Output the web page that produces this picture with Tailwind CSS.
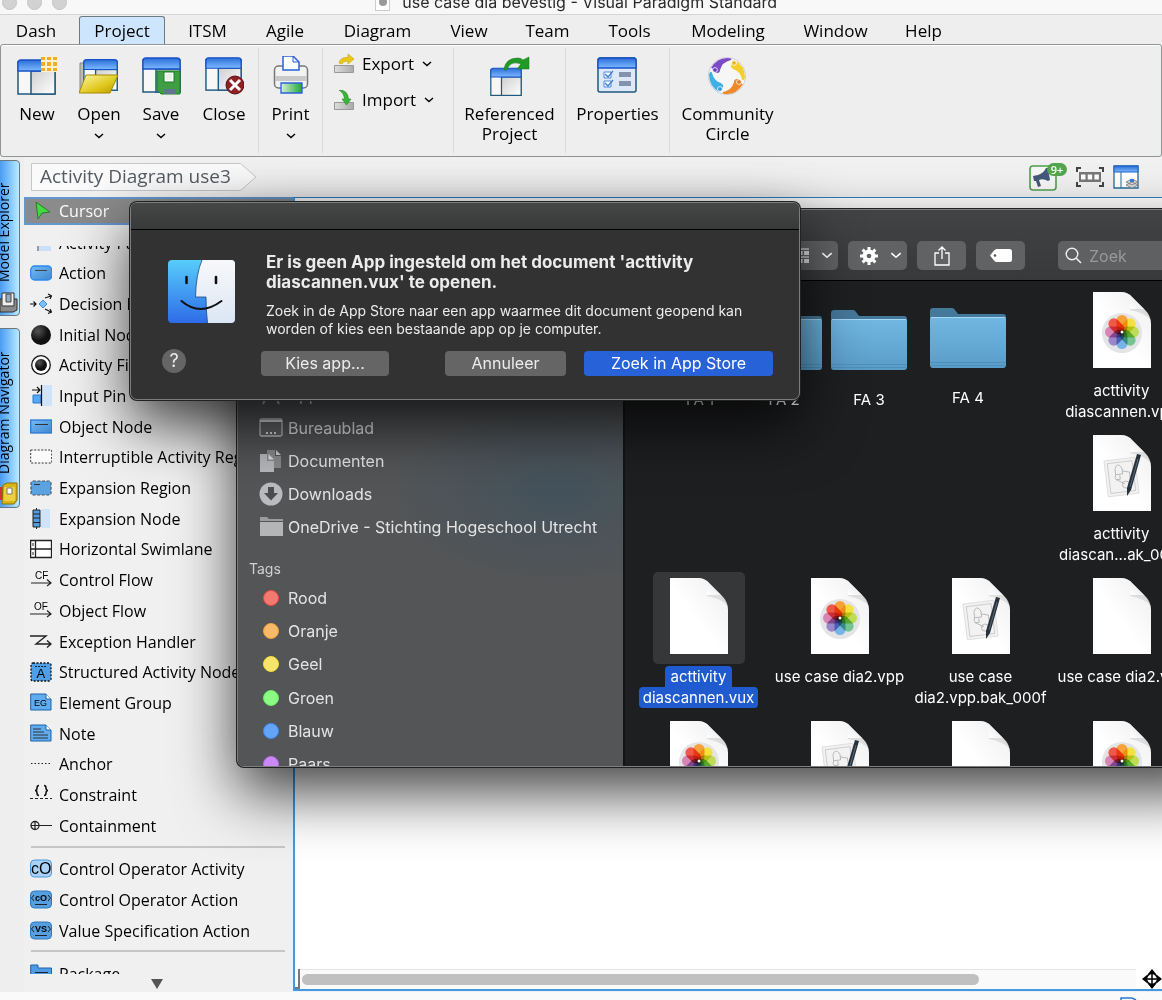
<!DOCTYPE html>
<html lang="nl">
<head>
<meta charset="utf-8">
<title>use case dia bevestig - Visual Paradigm Standard</title>
<script src="https://cdn.jsdelivr.net/npm/@tailwindcss/browser@4"></script>
</head>
<body class="h-screen overflow-hidden bg-[#eeeeee] font-['Open_Sans',sans-serif] text-black">

<svg class="absolute h-0 w-0" aria-hidden="true">
  <defs>
    <linearGradient id="gBar" x1="0" y1="0" x2="0" y2="1"><stop offset="0" stop-color="#2b6fd8"/><stop offset="1" stop-color="#7db9ff"/></linearGradient>
    <linearGradient id="gPane" x1="0" y1="0" x2="1" y2="1"><stop offset="0" stop-color="#cfcfcf"/><stop offset="1" stop-color="#ffffff"/></linearGradient>
    <linearGradient id="gBlue" x1="0" y1="0" x2="1" y2="1"><stop offset="0" stop-color="#74bbf7"/><stop offset="1" stop-color="#3f86cf"/></linearGradient>
    <linearGradient id="gYellow" x1="0" y1="0" x2="1" y2="1"><stop offset="0" stop-color="#fdf6a8"/><stop offset=".6" stop-color="#e0c81c"/><stop offset="1" stop-color="#b99a00"/></linearGradient>
    <linearGradient id="gGreen" x1="0" y1="0" x2="1" y2="0"><stop offset="0" stop-color="#d5f0d8"/><stop offset="1" stop-color="#1fa834"/></linearGradient>
    <linearGradient id="gFolder" x1="0" y1="0" x2="0" y2="1"><stop offset="0" stop-color="#71b7e2"/><stop offset="1" stop-color="#5a9cc8"/></linearGradient>
    <linearGradient id="gFace" x1="0" y1="0" x2="0" y2="1"><stop offset="0" stop-color="#57cdfb"/><stop offset="1" stop-color="#2e6be8"/></linearGradient>
    <linearGradient id="gFace2" x1="0" y1="0" x2="0" y2="1"><stop offset="0" stop-color="#f8f8fa"/><stop offset="1" stop-color="#dbe6f4"/></linearGradient>
    <linearGradient id="gFold" x1="0" y1="1" x2="1" y2="0"><stop offset="0" stop-color="#ffffff"/><stop offset="1" stop-color="#e3e3e3"/></linearGradient>
    <linearGradient id="gShade" x1="0" y1="1" x2="1" y2="0"><stop offset=".45" stop-color="#ffffff"/><stop offset="1" stop-color="#d8d8d8"/></linearGradient>
    <radialGradient id="gBall" cx=".35" cy=".3" r=".8"><stop offset="0" stop-color="#555"/><stop offset=".6" stop-color="#111"/></radialGradient>
    <linearGradient id="gGrey" x1="0" y1="0" x2="1" y2="0"><stop offset="0" stop-color="#ddd"/><stop offset="1" stop-color="#aaa"/></linearGradient>

    <symbol id="appwin" viewBox="0 0 40 40">
      <rect x="1" y="6" width="37" height="32" fill="#f7f7f7" stroke="#1f5a80" stroke-width="1.5"/>
      <rect x="14" y="15" width="24" height="23" fill="url(#gPane)" stroke="#1f5a80" stroke-width="1.5"/>
      <path d="M1 15V7Q1 4 4 4H35Q38 4 38 7V15Z" fill="url(#gBar)" stroke="#1750c8" stroke-width="1.3"/>
    </symbol>
    <symbol id="doc" viewBox="0 0 58 76">
      <path d="M0 0H28Q34 0 38 4L51 17Q58 24 58 32V76H0Z" fill="url(#gShade)"/>
      <path d="M0 0H28Q34 0 38 4V17H51Q58 24 58 32V76H0Z" fill="#fff" fill-opacity=".55"/>
      <path d="M37 3V17H51Z" fill="url(#gFold)"/><path d="M37 17H51Q56 20 58 28Q52 21 37 18Z" fill="#aaa" fill-opacity=".3"/>
    </symbol>
    <symbol id="flower" viewBox="0 0 58 76">
      <circle cx="29" cy="41" r="20" fill="#e4e4e6"/>
      <g style="isolation:isolate">
        <g style="mix-blend-mode:multiply"><rect x="23.500" y="23" width="11" height="18" rx="5.500" fill="#f7a13a"/></g>
        <g style="mix-blend-mode:multiply"><rect x="23.500" y="23" width="11" height="18" rx="5.500" fill="#f4e13e" transform="rotate(45 29 40)"/></g>
        <g style="mix-blend-mode:multiply"><rect x="23.500" y="23" width="11" height="18" rx="5.500" fill="#bfdc55" transform="rotate(90 29 40)"/></g>
        <g style="mix-blend-mode:multiply"><rect x="23.500" y="23" width="11" height="18" rx="5.500" fill="#74c492" transform="rotate(135 29 40)"/></g>
        <g style="mix-blend-mode:multiply"><rect x="23.500" y="23" width="11" height="18" rx="5.500" fill="#76b4e8" transform="rotate(180 29 40)"/></g>
        <g style="mix-blend-mode:multiply"><rect x="23.500" y="23" width="11" height="18" rx="5.500" fill="#9a86c8" transform="rotate(225 29 40)"/></g>
        <g style="mix-blend-mode:multiply"><rect x="23.500" y="23" width="11" height="18" rx="5.500" fill="#d884b4" transform="rotate(270 29 40)"/></g>
        <g style="mix-blend-mode:multiply"><rect x="23.500" y="23" width="11" height="18" rx="5.500" fill="#f0584a" transform="rotate(315 29 40)"/></g>
      </g>
      <circle cx="29" cy="40" r="1.500" fill="#fff"/>
    </symbol>
    <symbol id="sketch" viewBox="0 0 58 76">
      <g transform="rotate(-7 29 42)"><rect x="13" y="24" width="31" height="36" fill="#f2f2f2" stroke="#dadada" stroke-width=".8"/><rect x="16" y="27" width="25" height="30" fill="none" stroke="#aaa" stroke-width=".5"/>
      <path d="M23 39V33Q26 26 30 33V39ZM23 39Q21 42 23 44L31 49M30 36L37 38V46M23 44H27V40" fill="none" stroke="#999" stroke-width=".6"/><circle cx="32" cy="50" r="3.500" fill="none" stroke="#999" stroke-width=".6"/></g>
      <path d="M44 19L48 20L38 55L34 61L34 53Z" fill="#26313c"/><path d="M45 24L37 52" stroke="#5b6a78" stroke-width="1"/>
    </symbol>
    <symbol id="folder" viewBox="0 0 76 60">
      <path d="M0 3Q0 0 3 0H22Q24 0 25 2L28 6H73Q76 6 76 9V20H0Z" fill="#45799a"/>
      <path d="M0 11Q0 9 2 9H74Q76 9 76 11V57Q76 60 73 60H3Q0 60 0 57Z" fill="url(#gFolder)"/>
      <path d="M1 9.500H75" stroke="#a5d8f4" stroke-width="1"/><path d="M0 54.500H76M0 57.500H76" stroke="#4d8cb6" stroke-width=".8"/>
    </symbol>
    <symbol id="chev" viewBox="0 0 10 6"><path d="M1 1L5 4.500L9 1" fill="none" stroke="currentColor" stroke-width="1.400"/></symbol>
  </defs>
</svg>

<div class="flex h-full flex-col">
  <!-- window title -->
  <header class="relative h-[15px] shrink-0 overflow-hidden border-b border-[#d4d4d4] bg-[#f8f8f8]">
    <div class="-mt-[12px] flex h-7 items-center">
      <span class="ml-[2px] h-[15px] w-[15px] rounded-full border border-[#c4c4c4] bg-[#d2d2d2]"></span>
      <span class="ml-[10px] h-[15px] w-[15px] rounded-full border border-[#c4c4c4] bg-[#d2d2d2]"></span>
      <span class="ml-[10px] h-[15px] w-[15px] rounded-full border border-[#c4c4c4] bg-[#d2d2d2]"></span>
      <span class="mr-3 ml-auto flex h-[18px] w-[15px] items-center justify-center border border-[#ccc] bg-white"><span class="h-2 w-2 rounded-full bg-[#999]"></span></span>
      <h1 class="mr-[385px] font-['Inter',sans-serif] text-[16px] leading-7 whitespace-nowrap text-[#2a2a2a]">use case dia bevestig - Visual Paradigm Standard</h1>
    </div>
  </header>

  <!-- menu tabs -->
  <nav class="flex h-[29px] shrink-0 items-end gap-2 overflow-hidden pl-px text-[17px] leading-7">
    <button class="h-7 w-[70px] pt-px">Dash</button>
    <button class="h-7 w-[86px] rounded-t-[3px] border border-b-0 border-[#6f7a80] bg-[#cde6fd]">Project</button>
    <button class="h-7 w-[69px] pt-px">ITSM</button>
    <button class="h-7 w-[70px] pt-px">Agile</button>
    <button class="h-7 w-[99px] pt-px">Diagram</button>
    <button class="h-7 w-[68px] pt-px">View</button>
    <button class="h-7 w-[73px] pt-px">Team</button>
    <button class="h-7 w-[75px] pt-px">Tools</button>
    <button class="h-7 w-[106px] pt-px">Modeling</button>
    <button class="h-7 w-[93px] pt-px">Window</button>
    <button class="h-7 w-[67px] pt-px">Help</button>
  </nav>

  <!-- ribbon -->
  <section class="flex h-[113px] shrink-0 rounded-[3px] border border-[#8f9592] bg-[#eeeeee] py-[3px] text-[17px] leading-5 shadow-[inset_0_1px_0_#fff]">
    <div class="flex w-[258px] border-r border-[#d9d9d9] pl-[5px]">
      <button class="flex w-[62px] flex-col items-center pt-2"><svg class="h-10 w-10" viewBox="0 0 40 40"><use href="#appwin"/><path d="M24 0h16v16H24z" fill="#fdf3d0"/><path d="M24 1h4v3h-4zM30 1h4v3h-4zM36 1h4v3h-4zM24 6h4v4h-4zM30 6h4v4h-4zM36 6h4v4h-4zM24 12h4v3h-4zM30 12h4v3h-4zM36 12h4v3h-4z" fill="#f2ae20"/></svg><span class="mt-2">New</span></button>
      <button class="flex w-[62px] flex-col items-center pt-2"><svg class="h-10 w-10" viewBox="0 0 40 40"><path d="M1 7H6V36H1Z" fill="#bbb" stroke="#888"/><g transform="translate(4 0) scale(.9 .9)"><use href="#appwin" width="40" height="40"/></g><path d="M7 19H39L31 37H0Z" fill="url(#gYellow)" stroke="#a58a00"/></svg><span class="mt-2">Open</span><svg class="mt-[9px] h-[6px] w-[10px]"><use href="#chev"/></svg></button>
      <button class="flex w-[62px] flex-col items-center pt-2"><svg class="h-10 w-10" viewBox="0 0 40 40"><g transform="translate(1 -2)"><use href="#appwin" width="40" height="40"/></g><path d="M16 15H39V38H20L16 34Z" fill="#3f9d44" stroke="#1a8022"/><path d="M23 16H33V26H23Z" fill="#fff" stroke="#1a8022"/><path d="M25 18h6v6h-6z" fill="#e6f3e6"/><path d="M23 33H35V38H23Z" fill="#5f7590"/></svg><span class="mt-2">Save</span><svg class="mt-[9px] h-[6px] w-[10px]"><use href="#chev"/></svg></button>
      <button class="flex w-[64px] flex-col items-center pt-2"><svg class="h-10 w-10" viewBox="0 0 40 40"><g transform="translate(1 -2)"><use href="#appwin" width="38" height="38"/></g><circle cx="31" cy="29" r="9" fill="#8e1f22" stroke="#5a1014"/><path d="M26 24L36 34M36 24L26 34" stroke="#fff" stroke-width="3"/></svg><span class="mt-2">Close</span></button>
    </div>
    <div class="flex w-16 justify-center border-r border-[#d9d9d9]">
      <button class="flex flex-col items-center pt-2"><svg class="h-10 w-10" viewBox="0 0 40 40"><rect x="3.500" y="10" width="33" height="22" rx="4" fill="#f2f2f2" stroke="#777" stroke-width="1.500"/><path d="M4 20H36V25H4Z" fill="#c9c9c9"/><path d="M12 0H22L28 6V14H12Z" fill="#fff" stroke="#2a62d8" stroke-width="1.500"/><path d="M22 0V6H28" fill="none" stroke="#2a62d8"/><path d="M10 27H31V37H10Z" fill="url(#gGreen)" stroke="#2a62d8" stroke-width="1.300"/></svg><span class="mt-2">Print</span><svg class="mt-[9px] h-[6px] w-[10px]"><use href="#chev"/></svg></button>
    </div>
    <div class="flex w-[131px] flex-col gap-4 border-r border-[#d9d9d9] pt-[6px] pl-[11px]">
      <button class="flex h-5 items-center gap-2"><svg class="h-5 w-5" viewBox="0 0 20 20"><path d="M.5 11.500H19.500V18.500H.5Z" fill="url(#gGrey)" stroke="#999"/><path d="M5 9Q6 3 14 3.500V0L20 5L14 10V7Q9 7 8 10Z" fill="#e8c818" stroke="#c8a200" stroke-width=".6"/></svg>Export<svg class="h-[6px] w-[10px]"><use href="#chev"/></svg></button>
      <button class="flex h-5 items-center gap-2"><svg class="h-5 w-5" viewBox="0 0 20 20"><path d="M.5 12.500H19.500V19.500H.5Z" fill="url(#gGrey)" stroke="#999"/><path d="M5 0Q14 0 14.500 9H17L12.500 15L8 9H10.500Q10 3 5 0Z" fill="#3cb43c" stroke="#1c8a20" stroke-width=".6"/></svg>Import<svg class="h-[6px] w-[10px]"><use href="#chev"/></svg></button>
    </div>
    <div class="flex w-28 justify-center border-r border-[#d9d9d9]">
      <button class="flex flex-col items-center pt-2"><svg class="h-10 w-10" viewBox="0 0 40 40"><g transform="translate(0 9) scale(.82 .8)"><use href="#appwin" width="40" height="40"/></g><path d="M14 14Q15 2 28 2Q31 2 33 4L39 1V13H27L31 8Q20 4 17 14Z" fill="#219a26" stroke="#127016" stroke-width=".5"/></svg><span class="mt-2">Referenced<br>Project</span></button>
    </div>
    <div class="flex w-[104px] justify-center border-r border-[#d9d9d9]">
      <button class="flex flex-col items-center pt-2"><svg class="h-10 w-10" viewBox="0 0 40 40"><rect x="1" y="2" width="38" height="34" rx="2" fill="#dde9f8" stroke="#1f5a80" stroke-width="1.500"/><path d="M1 12V5Q1 2 4 2H36Q39 2 39 5V12Z" fill="url(#gBar)" stroke="#1750c8" stroke-width="1.300"/><path d="M7 16h7v6H7zM7 25h7v6H7z" fill="#fff" stroke="#4a8ad8"/><path d="M8 18l3 3 5-6M8 27l3 3 5-6" fill="none" stroke="#3c7ed6" stroke-width="1.300"/><path d="M22 16H34V21H22ZM22 25H34V30H22Z" fill="#8492ad"/></svg><span class="mt-2">Properties</span></button>
    </div>
    <div class="flex w-[115px] justify-center">
      <button class="flex flex-col items-center pt-2"><svg class="h-10 w-10" viewBox="0 0 40 40"><circle cx="20" cy="20" r="18.500" fill="#f6f6f6" stroke="#c0c0cc" stroke-width=".7"/><path d="M4 12Q10 2 20 2Q26 2 24 4Q15 6 13 14Q13 17 10 17Q6 16 5 12Z" fill="#7b4bc8"/><circle cx="8" cy="14" r="2.400" fill="#6a3dc0" stroke="#fff" stroke-width=".8"/><path d="M28 4Q38 10 38 22Q36 26 35 23Q33 15 26 13Q22 10 25 8Q29 8 30 6Z" fill="#f4cf2a"/><circle cx="27" cy="7" r="2.400" fill="#e5b818" stroke="#fff" stroke-width=".8"/><path d="M36 28Q30 38 20 38Q14 38 16 36Q25 34 27 26Q27 23 30 23Q34 24 35 28Z" fill="#ee8a2a"/><circle cx="32" cy="26" r="2.400" fill="#e07a1c" stroke="#fff" stroke-width=".8"/><path d="M12 36Q2 30 2 18Q4 14 5 17Q7 25 14 27Q18 30 15 32Q11 32 11 34Z" fill="#3fb0e6"/><circle cx="13" cy="33" r="2.400" fill="#2d9cd8" stroke="#fff" stroke-width=".8"/></svg><span class="mt-2">Community<br>Circle</span></button>
    </div>
  </section>

  <!-- work area -->
  <div class="flex min-h-0 flex-1">
    <!-- docked side tabs -->
    <aside class="flex w-6 shrink-0 flex-col gap-3 pt-[3px]">
      <button class="-ml-3 flex h-[156px] w-8 rotate-180 items-center rounded-l-[4px] border border-[#6a7680] bg-linear-to-l from-[#3f93ee] from-30% via-[#6fb8fb] via-60% to-[#b9ebff] pt-[33px] text-[14px] leading-[30px] [writing-mode:vertical-rl]">
        <svg class="-mt-8 mb-2 h-6 w-5 rotate-180 self-end" viewBox="0 0 20 24"><path d="M1 9H18V20L14 22H1Z" fill="#8a8a8a" stroke="#333"/><path d="M3 3H15V16H3Z" fill="#eee" stroke="#333"/><path d="M7 4h5v8H7z" fill="#9ab" stroke="#444"/></svg>Model Explorer</button>
      <button class="-ml-3 flex h-[180px] w-8 rotate-180 items-center rounded-l-[4px] border border-[#6a7680] bg-linear-to-l from-[#3f93ee] from-30% via-[#6fb8fb] via-60% to-[#b9ebff] pt-[33px] text-[14px] leading-[30px] [writing-mode:vertical-rl]">
        <svg class="-mt-8 mb-2 h-6 w-5 rotate-180 self-end" viewBox="0 0 20 24"><path d="M0 5H4V18H0Z" fill="#c33"/><path d="M4 3L8 1H18V18L15 22H3Z" fill="#d8b414" stroke="#8a7000"/><path d="M5 5h11v14H5z" fill="#ecd040"/><path d="M8 6h5v6H8z" fill="#fff" stroke="#777"/></svg>Diagram Navigator</button>
    </aside>

    <div class="flex min-w-0 flex-1 flex-col">
      <!-- breadcrumb -->
      <div class="flex h-10 shrink-0 items-center bg-[#f1f1f1]">
        <div class="relative ml-[7px] h-7 w-[226px]">
          <svg class="absolute inset-0 h-full w-full" viewBox="0 0 226 28"><path d="M.5 .5H209.500L225 14L209.500 27.500H.5Z" fill="#fafafa" stroke="#c4c8cc"/></svg>
          <a href="#" class="relative block pl-[9px] text-[19px] leading-[26px] whitespace-nowrap text-[#555c63]">Activity Diagram use3</a>
        </div>
        <div class="mr-[23px] ml-auto flex items-center gap-[9px] pb-px">
          <button class="relative" aria-label="Notifications"><svg class="h-7 w-[38px]" viewBox="0 0 38 28"><rect x="1" y="3" width="26" height="24" rx="3" fill="#f6f6f6" stroke="#4f9e4c" stroke-width="1.600"/><path d="M4 13L9 12Q15 10 17 5L19 5L21 17L19 18Q14 15 10 17L12 23L9 24L7 18L5 18Z" fill="#44597a"/></svg><span class="absolute top-0 right-0 h-[13px] w-5 rounded-full bg-[#53a64e] text-center text-[11px] leading-[13px] font-semibold text-white">9+</span></button>
          <button aria-label="Fit"><svg class="h-5 w-7" viewBox="0 0 28 20"><path d="M1 5V1H5M23 1H27V5M27 15V19H23M5 19H1V15" fill="none" stroke="#444" stroke-width="2"/><path d="M3 5H25V15H3Z" fill="#777"/><path d="M5 7.500h4.500v5H5zM11.700 7.500h4.500v5h-4.500zM18.400 7.500h4.500v5h-4.500z" fill="#fff"/></svg></button>
          <button aria-label="Panels"><svg class="h-6 w-[26px]" viewBox="0 0 26 24"><path d="M1 1H25V23H1Z" fill="#fff" stroke="#2a6a98" stroke-width="1.300"/><path d="M1 1H25V7H1Z" fill="url(#gBar)" stroke="#1d62d0"/><path d="M8 7V23" stroke="#2a6a98"/><path d="M13 20l6-3 6 3-6 3zM13 17l6-3 6 3-6 3z" fill="#ddd" stroke="#777" stroke-width=".8"/><path d="M17 14h4v3h-4z" fill="#3a7de0"/></svg></button>
        </div>
      </div>

      <div class="flex min-h-0 flex-1">
        <!-- palette -->
        <div class="flex w-[269px] shrink-0 flex-col overflow-hidden bg-[#f0f0f0] text-[16px] whitespace-nowrap">
          <button class="flex h-7 shrink-0 items-center gap-2 border-2 border-[#6497cf] bg-[#8b8b8b] pl-2 text-left text-white"><svg class="h-5 w-[17px]" viewBox="0 0 17 20"><path d="M2 1L16 11L8 12L4 18Z" fill="#45d845" stroke="#2a7a2a"/></svg><span>Cursor</span></button>
          <div class="mt-[21px] flex h-3 shrink-0 items-end gap-[7px] overflow-hidden pl-[6px] leading-[30px]"><svg class="mb-[7px] h-6 w-[22px] shrink-0" viewBox="0 0 22 24"><path d="M8 2V24" stroke="#444"/><path d="M9 4H21V24H9Z" fill="#c8e0fa"/></svg>Activity Parameter Node</div>
          <ul class="grid h-[583px] shrink-0 auto-rows-fr pl-[6px]">
            <li class="flex items-center gap-[7px]"><svg class="h-6 w-[22px]" viewBox="0 0 22 24"><rect x=".7" y="5" width="21" height="14" rx="4" fill="url(#gBlue)" stroke="#2a8af0" stroke-width="1.300"/><path d="M5 9.500H17" stroke="#444"/></svg>Action</li>
            <li class="flex items-center gap-[7px]"><svg class="h-6 w-[22px]" viewBox="0 0 22 24"><path d="M9 12L13 8L17 12L13 16Z" fill="#7cc0fb" stroke="#3c8ad8"/><path d="M0 12H6M3.500 9.500L6 12L3.500 14.500M15 6L21 4M18 2L21.500 4L20 7M15 17L21 20M20 17L21.500 20L18 21.500" fill="none" stroke="#111" stroke-width="1.200"/></svg>Decision Node</li>
            <li class="flex items-center gap-[7px]"><svg class="h-6 w-[22px]" viewBox="0 0 22 24"><circle cx="11" cy="12" r="10" fill="url(#gBall)"/></svg>Initial Node</li>
            <li class="flex items-center gap-[7px]"><svg class="h-6 w-[22px]" viewBox="0 0 22 24"><circle cx="11" cy="12" r="9.300" fill="#fff" stroke="#111" stroke-width="1.300"/><circle cx="11" cy="12" r="6" fill="url(#gBall)"/></svg>Activity Final Node</li>
            <li class="flex items-center gap-[7px]"><svg class="h-6 w-[22px]" viewBox="0 0 22 24"><path d="M12 1H22V22H12Z" fill="#cfe4fa"/><path d="M3 11H11V19H3Z" fill="#57a8f2" stroke="#2a7ad0"/><path d="M11.500 1V22M2 6H10M7 3L10 6L7 9" fill="none" stroke="#111" stroke-width="1.200"/></svg>Input Pin</li>
            <li class="flex items-center gap-[7px]"><svg class="h-6 w-[22px]" viewBox="0 0 22 24"><rect x=".7" y="5" width="21" height="13" fill="url(#gBlue)" stroke="#2a7ad8" stroke-width="1.300"/><path d="M5 9.500H18" stroke="#333"/></svg>Object Node</li>
            <li class="flex items-center gap-[7px]"><svg class="h-6 w-[22px]" viewBox="0 0 22 24"><rect x=".7" y="5" width="21" height="13" fill="#fafafa" stroke="#333" stroke-dasharray="2 1.500"/></svg>Interruptible Activity Region</li>
            <li class="flex items-center gap-[7px]"><svg class="h-6 w-[22px]" viewBox="0 0 22 24"><rect x="1" y="5" width="20" height="14" rx="2" fill="#5aa3e0" stroke="#555" stroke-dasharray="3 1.500" stroke-width="1.200"/><path d="M4 8.500H10" stroke="#333"/></svg>Expansion Region</li>
            <li class="flex items-center gap-[7px]"><svg class="h-6 w-[22px]" viewBox="0 0 22 24"><path d="M11 2H20V21H11Z" fill="#cfe4fa"/><path d="M3 3H10V20H3Z" fill="#4f9be6" stroke="#222"/><path d="M3 7H10M3 11H10M3 15.500H10M6.500 1V3M6.500 20V22" stroke="#222"/></svg>Expansion Node</li>
            <li class="flex items-center gap-[7px]"><svg class="h-6 w-[22px]" viewBox="0 0 22 24"><path d="M.6 3.500H21.500V20.500H.6ZM.6 12H21.500M5.500 3.500V20.500" fill="#fff" stroke="#222" stroke-width="1.300"/><path d="M3 6V9M3 15V18" stroke="#222"/></svg>Horizontal Swimlane</li>
            <li class="flex items-center gap-[7px]"><svg class="h-6 w-[22px]" viewBox="0 0 22 24"><text x="5" y="11" font-family="Liberation Sans" font-size="10">CF</text><path d="M1 15H21M17 11.500L21 15L17 18" fill="none" stroke="#222" stroke-width="1.200"/></svg>Control Flow</li>
            <li class="flex items-center gap-[7px]"><svg class="h-6 w-[22px]" viewBox="0 0 22 24"><text x="4" y="11" font-family="Liberation Sans" font-size="10">OF</text><path d="M0 15H21M17 11.500L21 15L17 18" fill="none" stroke="#222" stroke-width="1.200"/></svg>Object Flow</li>
            <li class="flex items-center gap-[7px]"><svg class="h-6 w-[22px]" viewBox="0 0 22 24"><path d="M0 6H16L6 14H21M17 10.500L21 14L17 17.500" fill="none" stroke="#222" stroke-width="1.400"/></svg>Exception Handler</li>
            <li class="flex items-center gap-[7px]"><svg class="h-6 w-[22px]" viewBox="0 0 22 24"><rect x="1" y="3" width="20" height="18" rx="2" fill="#4f9fe6" stroke="#111" stroke-dasharray="2 1.500" stroke-width="1.300"/><text x="6.500" y="18" font-family="Liberation Sans" font-size="13">A</text><path d="M5 6.500H17" stroke="#222" stroke-dasharray="2 1"/></svg>Structured Activity Node</li>
            <li class="flex items-center gap-[7px]"><svg class="h-6 w-[22px]" viewBox="0 0 22 24"><path d="M.7 3H16L21 8V19H.7Z" fill="#5fadf0" stroke="#1f62a8"/><path d="M16 3V8H21" fill="#fff" stroke="#1f62a8"/><text x="4" y="15" font-family="Liberation Sans" font-size="9">EG</text></svg>Element Group</li>
            <li class="flex items-center gap-[7px]"><svg class="h-6 w-[22px]" viewBox="0 0 22 24"><path d="M.7 3H16L21 8V19H.7Z" fill="#5fadf0" stroke="#1f62a8"/><path d="M16 3V8H21" fill="#fff" stroke="#1f62a8"/><path d="M3 7H11M3 10H14M3 13H18M3 16H18" stroke="#333"/></svg>Note</li>
            <li class="flex items-center gap-[7px]"><svg class="h-6 w-[22px]" viewBox="0 0 22 24"><path d="M1 11.500H22" stroke="#222" stroke-dasharray="1.500 2"/></svg>Anchor</li>
            <li class="flex items-center gap-[7px]"><svg class="h-6 w-[22px]" viewBox="0 0 22 24"><path d="M0 15.500H22" stroke="#222" stroke-dasharray="3 2"/><path d="M9 2.500Q7 2.500 7 5T5 7.500Q7 7.500 7 10T9 12.500M14 2.500Q16 2.500 16 5T18 7.500Q16 7.500 16 10T14 12.500" fill="none" stroke="#111" stroke-width="1.500"/></svg>Constraint</li>
            <li class="flex items-center gap-[7px]"><svg class="h-6 w-[22px]" viewBox="0 0 22 24"><circle cx="5" cy="11.500" r="4" fill="none" stroke="#222" stroke-width="1.300"/><path d="M1 11.500H22M5 7.500V15.500" stroke="#222" stroke-width="1.200"/></svg>Containment</li>
          </ul>
          <hr class="mt-[5px] mr-2 ml-[7px] shrink-0 border-t-2 border-[#c6c6c6]">
          <ul class="mt-[6px] grid h-[92px] shrink-0 auto-rows-fr pl-[6px]">
            <li class="flex items-center gap-[7px]"><svg class="h-6 w-[22px]" viewBox="0 0 22 24"><rect x=".5" y="3" width="21" height="17" rx="4" fill="#a8d2f8" stroke="#4a96dc"/><text x="1" y="17" font-family="Liberation Sans" font-size="16">cO</text></svg>Control Operator Activity</li>
            <li class="flex items-center gap-[7px]"><svg class="h-6 w-[22px]" viewBox="0 0 22 24"><rect x=".5" y="3" width="21" height="17" rx="4" fill="#559fe0" stroke="#2f78bc"/><path d="M4 7L1.500 10L4 13M18 7L20.500 10L18 13M5 16.500H17" fill="none" stroke="#222"/><text x="5" y="13" font-family="Liberation Sans" font-size="9" font-weight="bold">cO</text></svg>Control Operator Action</li>
            <li class="flex items-center gap-[7px]"><svg class="h-6 w-[22px]" viewBox="0 0 22 24"><rect x=".5" y="3" width="21" height="17" rx="4" fill="#559fe0" stroke="#2f78bc"/><path d="M4 7L1.500 10L4 13M18 7L20.500 10L18 13M5 16.500H17" fill="none" stroke="#222"/><text x="5" y="13" font-family="Liberation Sans" font-size="9" font-weight="bold">VS</text></svg>Value Specification Action</li>
          </ul>
          <hr class="mt-1 mr-2 ml-[7px] shrink-0 border-t-2 border-[#c6c6c6]">
          <div class="mt-[7px] flex h-[15px] shrink-0 items-start gap-[7px] overflow-hidden pl-[6px] leading-[30px]"><svg class="mt-[3px] h-6 w-[22px]" viewBox="0 0 22 24"><path d="M.7 3H8V6H21.500V20H.7Z" fill="#4f9be6" stroke="#1f62a8"/><path d="M5 10.500H18" stroke="#222"/></svg>Package</div>
          <button class="flex h-5 shrink-0 items-center justify-center pr-1" aria-label="More"><svg class="h-[10px] w-3" viewBox="0 0 12 10"><path d="M0 0H12L6 10Z" fill="#555"/></svg></button>
        </div>

        <!-- diagram canvas -->
        <div class="mb-[9px] flex min-w-0 flex-1 flex-col border-t border-b-2 border-l-2 border-[#429be2] border-t-[#2d7fc4] bg-white">
          <div class="flex-1"></div>
          <div class="flex h-5 shrink-0 bg-white">
            <span class="w-[5px] border-r-2 border-b-2 border-[#777]"></span>
            <div class="flex flex-1 items-center border-t border-[#e4e4e4] bg-[#fafafa]"><div class="ml-[2px] h-[11px] w-[81%] rounded-full bg-[#c0c0c0]"></div></div>
            <svg class="ml-[6px] h-5 w-5" viewBox="0 0 20 20"><path d="M10 0L14 5H6ZM10 20L14 15H6ZM0 10L5 6V14ZM20 10L15 6V14Z" fill="#000"/><circle cx="10" cy="10" r="5.500" fill="#fff" stroke="#000" stroke-width="1.500"/><path d="M10 4V16M4 10H16" stroke="#000" stroke-width="1.500"/></svg>
          </div>
        </div>
      </div>
    </div>
  </div>
</div>
<!-- status strip -->
<footer class="absolute inset-x-0 bottom-0 flex h-2 items-end justify-end bg-[#fafafa] pr-6"><svg class="h-[3px] w-[18px]" viewBox="0 0 18 3"><path d="M1 3V1H12L16 3" fill="none" stroke="#2f78d0" stroke-width="1.500"/></svg></footer>

<!-- Finder window -->
<main class="absolute top-[209px] -right-[60px] left-[237px] flex h-[558px] flex-col overflow-hidden rounded-[7px] border border-[#7d7e80] bg-[#1e1f21] font-['Inter',sans-serif] text-[#e4e4e4] shadow-[0_0_0_1px_#222,0_25px_60px_rgba(0,0,0,0.75)]">
  <div class="flex h-[71px] shrink-0 items-end justify-end gap-[10px] border-b border-black bg-linear-to-b from-[#414344] to-[#38393a] pb-[10px] text-white">
    <button class="flex h-[29px] w-[60px] items-center justify-end gap-3 rounded-[5px] bg-[#616263] pr-[5px]" aria-label="Group"><svg class="h-4 w-[18px]" viewBox="0 0 18 16"><path d="M0 1H18M0 9H18" stroke="#fff"/><path d="M0 3h5v4H0zM6.500 3h5v4h-5zM13 3h5v4h-5zM0 11h5v4H0zM6.500 11h5v4h-5zM13 11h5v4h-5z" fill="#ddd"/></svg><svg class="h-[7px] w-3 overflow-visible" viewBox="0 0 10 6"><use href="#chev" width="10" height="6"/></svg></button>
    <button class="flex h-[29px] w-[59px] items-center justify-end gap-3 rounded-[5px] bg-[#616263] pr-[5px]" aria-label="Actions"><svg class="h-[18px] w-[18px]" viewBox="0 0 18 18"><path d="M9 0V18M0 9H18M2.600 2.600L15.400 15.400M15.400 2.600L2.600 15.400" stroke="#fff" stroke-width="3"/><circle cx="9" cy="9" r="6.500" fill="#fff"/><circle cx="9" cy="9" r="2.300" fill="#616263"/></svg><svg class="h-[7px] w-3" viewBox="0 0 10 6"><use href="#chev" width="10" height="6"/></svg></button>
    <button class="flex h-[29px] w-[49px] items-center justify-center rounded-[5px] bg-[#616263]" aria-label="Share"><svg class="h-5 w-4" viewBox="0 0 16 20"><path d="M5 7H1V19H15V7H11M8 13V1M4.500 4.500L8 1L11.500 4.500" fill="none" stroke="#fff" stroke-width="1.300"/></svg></button>
    <button class="flex h-[29px] w-[49px] items-center justify-center rounded-[5px] bg-[#616263]" aria-label="Tags"><svg class="h-[13px] w-[22px]" viewBox="0 0 22 13"><path d="M7 0H19.500Q22 0 22 2.500V10.500Q22 13 19.500 13H7Q5 13 4 11.500L0 6.500L4 1.500Q5 0 7 0Z" fill="#fff"/><circle cx="5" cy="6.500" r="1.300" fill="#555"/></svg></button>
    <label class="ml-[23px] flex h-[29px] w-[163px] items-center gap-[7px] rounded-[5px] bg-[#5f6061] pl-[7px]"><svg class="h-[17px] w-[17px]" viewBox="0 0 17 17"><circle cx="7" cy="7" r="5.800" fill="none" stroke="#eee" stroke-width="1.400"/><path d="M11 11L16 16" stroke="#eee" stroke-width="1.600"/></svg><input type="search" placeholder="Zoek" aria-label="Zoek" class="w-24 bg-transparent text-[16px] placeholder:text-[#999]"></label>
  </div>
  <div class="flex min-h-0 flex-1">
    <nav class="w-[387px] shrink-0 overflow-hidden border-r-2 border-[#141414] bg-[#535557] bg-[radial-gradient(ellipse_160px_90px_at_320px_210px,#43525c,#535557)] text-[16px]">
      <ul class="mt-[97px] grid h-[166px] auto-rows-fr">
        <li class="flex items-center gap-[5px] pl-[21px]"><svg class="h-6 w-6" viewBox="0 0 24 24"><path d="M4 21L12 4L20 21M3 15H21" fill="none" stroke="#bbb" stroke-width="2"/></svg>Apps</li>
        <li class="flex items-center gap-[5px] pl-[21px]"><svg class="h-6 w-6" viewBox="0 0 24 24"><rect x="1" y="3" width="22" height="17" rx="1.500" fill="#606264" stroke="#c0c1c3" stroke-width="1.300"/><path d="M1 5H23M7 17H9M11 17H13M15 17H17" stroke="#ddd" stroke-width="2"/></svg>Bureaublad</li>
        <li class="flex items-center gap-[5px] pl-[21px]"><svg class="h-6 w-6" viewBox="0 0 24 24"><path d="M8 1H16V7H22V19H8Z" fill="#888a8c"/><path d="M17 1L22 6H17Z" fill="#ccc"/><path d="M1 5H8V12H15V23H1Z" fill="#b6b8bb"/><path d="M9.500 5L15 10.500H9.500Z" fill="#ddd"/></svg>Documenten</li>
        <li class="flex items-center gap-[5px] pl-[21px]"><svg class="h-6 w-6" viewBox="0 0 24 24"><circle cx="12" cy="12" r="11.500" fill="#b9bbbe"/><path d="M9 5H15V11H19L12 18.500L5 11H9Z" fill="#4b4d4f"/></svg>Downloads</li>
        <li class="flex items-center gap-[5px] pl-[21px]"><svg class="h-6 w-6" viewBox="0 0 24 24"><path d="M1 2H8L10 4H24V6H1Z" fill="#9a9c9e"/><path d="M1 7H24V21H1Z" fill="#b3b5b7"/></svg><span class="whitespace-nowrap">OneDrive - Stichting Hogeschool Utrecht</span></li>
      </ul>
      <h2 class="mt-[15px] pl-[11px] text-[14px] leading-5 text-[#d0d0d0]">Tags</h2>
      <ul class="mt-[2px] grid h-[200px] auto-rows-fr">
        <li class="flex items-center gap-[9px] pl-[25px]"><span class="h-4 w-4 rounded-full border border-[#f0483e] bg-[#f27a70]"></span>Rood</li>
        <li class="flex items-center gap-[9px] pl-[25px]"><span class="h-4 w-4 rounded-full border border-[#f2a23a] bg-[#f6ba68]"></span>Oranje</li>
        <li class="flex items-center gap-[9px] pl-[25px]"><span class="h-4 w-4 rounded-full border border-[#f3da38] bg-[#f8e46c]"></span>Geel</li>
        <li class="flex items-center gap-[9px] pl-[25px]"><span class="h-4 w-4 rounded-full border border-[#66ee62] bg-[#8dfa86]"></span>Groen</li>
        <li class="flex items-center gap-[9px] pl-[25px]"><span class="h-4 w-4 rounded-full border border-[#3a8cf4] bg-[#64a4f8]"></span>Blauw</li>
        <li class="flex items-center gap-[9px] pl-[25px]"><span class="h-4 w-4 rounded-full border border-[#b968f0] bg-[#c98af8]"></span>Paars</li>
      </ul>
    </nav>

    <div class="relative min-w-0 flex-1 overflow-hidden text-[15px] leading-[21px] text-white">
      <!-- loosely placed folders -->
      <figure class="absolute top-[29px] left-[37px] flex flex-col items-center gap-[19px]"><svg class="h-[60px] w-[76px]"><use href="#folder"/></svg><figcaption>FA 1</figcaption></figure>
      <figure class="absolute top-[29px] left-[121px] flex flex-col items-center gap-[19px]"><svg class="h-[60px] w-[76px]"><use href="#folder"/></svg><figcaption>FA 2</figcaption></figure>
      <figure class="absolute top-[29px] left-[206px] flex flex-col items-center gap-[19px]"><svg class="h-[60px] w-[76px]"><use href="#folder"/></svg><figcaption>FA 3</figcaption></figure>
      <figure class="absolute top-[27px] left-[305px] flex flex-col items-center gap-[19px]"><svg class="h-[60px] w-[76px]"><use href="#folder"/></svg><figcaption>FA 4</figcaption></figure>
      <!-- files -->
      <div class="grid auto-rows-[143px] grid-cols-[repeat(4,141px)] pt-[5px] pl-[3px] text-center">
        <figure class="col-start-4 flex flex-col items-center"><div class="p-[6px]"><svg class="h-20 w-20 px-[2px] pb-1" viewBox="0 0 58 76"><use href="#doc" width="58" height="76"/><use href="#flower" width="58" height="76"/></svg></div><figcaption class="mt-[2px] whitespace-nowrap">acttivity<br>diascannen.vpp</figcaption></figure>
        <figure class="col-start-4 flex flex-col items-center"><div class="p-[6px]"><svg class="h-20 w-20 px-[2px] pb-1" viewBox="0 0 58 76"><use href="#doc" width="58" height="76"/><use href="#sketch" width="58" height="76"/></svg></div><figcaption class="mt-[2px] whitespace-nowrap">acttivity<br>diascan...ak_000f</figcaption></figure>
        <figure class="flex flex-col items-center"><div class="rounded-[5px] bg-[#363738] p-[6px]"><svg class="h-20 w-20 px-[2px] pb-1" viewBox="0 0 58 76"><use href="#doc" width="58" height="76"/></svg></div><figcaption class="mt-[2px] flex flex-col items-center whitespace-nowrap"><span class="rounded-t-[4px] bg-[#1f5bcf] px-[6px]">acttivity</span><span class="rounded-[4px] bg-[#1f5bcf] px-1">diascannen.vux</span></figcaption></figure>
        <figure class="flex flex-col items-center"><div class="p-[6px]"><svg class="h-20 w-20 px-[2px] pb-1" viewBox="0 0 58 76"><use href="#doc" width="58" height="76"/><use href="#flower" width="58" height="76"/></svg></div><figcaption class="mt-[2px] whitespace-nowrap">use case dia2.vpp</figcaption></figure>
        <figure class="flex flex-col items-center"><div class="p-[6px]"><svg class="h-20 w-20 px-[2px] pb-1" viewBox="0 0 58 76"><use href="#doc" width="58" height="76"/><use href="#sketch" width="58" height="76"/></svg></div><figcaption class="mt-[2px] whitespace-nowrap">use case<br>dia2.vpp.bak_000f</figcaption></figure>
        <figure class="flex flex-col items-center"><div class="p-[6px]"><svg class="h-20 w-20 px-[2px] pb-1" viewBox="0 0 58 76"><use href="#doc" width="58" height="76"/></svg></div><figcaption class="mt-[2px] whitespace-nowrap">use case dia2.vux</figcaption></figure>
        <figure class="flex flex-col items-center"><div class="p-[6px]"><svg class="h-20 w-20 px-[2px] pb-1" viewBox="0 0 58 76"><use href="#doc" width="58" height="76"/><use href="#flower" width="58" height="76"/></svg></div></figure>
        <figure class="flex flex-col items-center"><div class="p-[6px]"><svg class="h-20 w-20 px-[2px] pb-1" viewBox="0 0 58 76"><use href="#doc" width="58" height="76"/><use href="#sketch" width="58" height="76"/></svg></div></figure>
        <figure class="flex flex-col items-center"><div class="p-[6px]"><svg class="h-20 w-20 px-[2px] pb-1" viewBox="0 0 58 76"><use href="#doc" width="58" height="76"/></svg></div></figure>
        <figure class="flex flex-col items-center"><div class="p-[6px]"><svg class="h-20 w-20 px-[2px] pb-1" viewBox="0 0 58 76"><use href="#doc" width="58" height="76"/><use href="#flower" width="58" height="76"/></svg></div></figure>
      </div>
    </div>
  </div>
</main>

<!-- alert dialog -->
<section role="alertdialog" aria-labelledby="alertTitle" class="absolute top-[202px] left-[130px] flex h-[198px] w-[670px] flex-col overflow-hidden rounded-[7px] border border-[#7c7c7c] bg-[#323232] font-['Inter',sans-serif] text-[#ececec] shadow-[0_0_0_1px_#222,0_25px_60px_rgba(0,0,0,0.75)]">
  <div class="h-[27px] shrink-0 border-b border-black bg-linear-to-b from-[#454747] to-[#383939]"></div>
  <div class="flex">
    <div class="w-[135px] shrink-0 pt-[30px] pl-[37px]">
      <svg class="h-[63px] w-[67px]" viewBox="0 0 67 63"><rect width="67" height="63" rx="4" fill="url(#gFace)"/><path d="M34 0H63Q67 0 67 4V59Q67 63 63 63H39.500Q38 50 38 37H27.500Q28 14 34 0Z" fill="url(#gFace2)"/><path d="M34 0Q28 14 27.500 37H38Q38 50 39.500 63" fill="none" stroke="#1c4a78" stroke-width=".8"/><path d="M18.500 17V23M48 17V23" stroke="#111" stroke-width="2.600" stroke-linecap="round"/><path d="M13.500 41Q32 57 53.500 41" fill="none" stroke="#111" stroke-width="2" stroke-linecap="round"/></svg>
      <button class="mt-[26px] -ml-[6px] block h-6 w-6 rounded-full bg-[#656565] text-center text-[18px] leading-6" aria-label="Help">?</button>
    </div>
    <div class="flex-1 whitespace-nowrap">
      <h2 id="alertTitle" class="pt-[22px] text-[17px] leading-5 font-bold">Er is geen App ingesteld om het document 'acttivity<br>diascannen.vux' te openen.</h2>
      <p class="mt-[10px] text-[14px] leading-[18px]">Zoek in de App Store naar een app waarmee dit document geopend kan<br>worden of kies een bestaande app op je computer.</p>
      <div class="mt-[13px] -ml-[5px] flex pr-[26px] text-[16px] leading-[25px]">
        <button class="h-[25px] w-[128px] rounded-[4px] bg-[#656565]">Kies app...</button>
        <button class="mr-[18px] ml-auto h-[25px] w-[121px] rounded-[4px] bg-[#656565]">Annuleer</button>
        <button class="h-[25px] w-[189px] rounded-[4px] bg-[#2762d9] text-white">Zoek in App Store</button>
      </div>
    </div>
  </div>
</section>
</body>
</html>
